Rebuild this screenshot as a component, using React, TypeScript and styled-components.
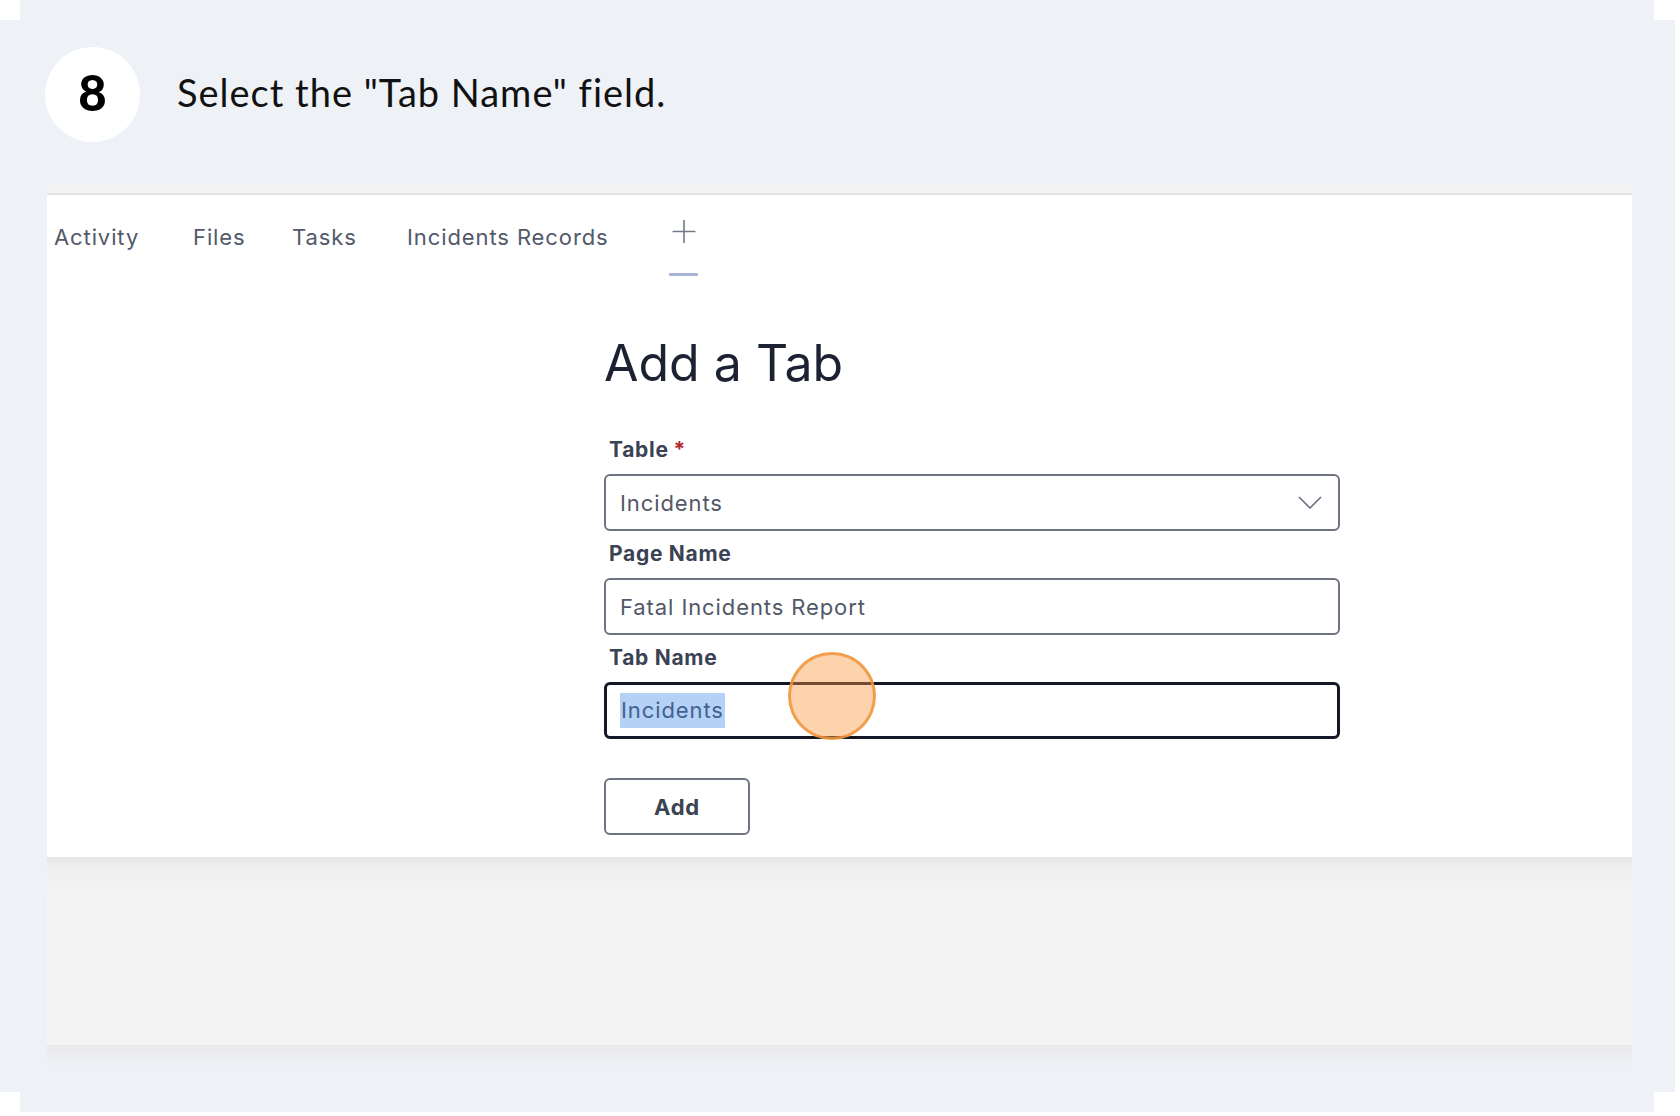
import React from 'react';
import styled, { createGlobalStyle } from 'styled-components';

const GlobalStyle = createGlobalStyle`
  html, body {
    margin: 0;
    padding: 0;
    background: #ffffff;
  }
  * {
    box-sizing: border-box;
  }
`;

const BG = '#eef2f7';

const Frame = styled.div`
  width: 1680px;
  height: 1116px;
  display: flex;
  flex-direction: column;
  overflow: hidden;
`;

// the step card is a cropped capture: a narrower lip above and below
const Lip = styled.div`
  height: 20px;
  width: 1634px;
  margin-left: 20px;
  background: ${BG};
  flex-shrink: 0;
`;

const Board = styled.div`
  width: 1675px;
  height: 1072px;
  background: ${BG};
  display: flex;
  flex-direction: column;
  flex-shrink: 0;
`;

const StepHeader = styled.div`
  display: flex;
  align-items: center;
  gap: 37px;
  padding: 27px 0 0 45px;
`;

const StepBadge = styled.div`
  width: 95px;
  height: 95px;
  border-radius: 50%;
  background: #ffffff;
  display: flex;
  align-items: center;
  justify-content: center;
  font-family: Lato, 'Open Sans', sans-serif;
  font-weight: 900;
  font-size: 49px;
  color: #000;
  padding-bottom: 6px;
`;

const StepTitle = styled.div`
  font-family: Lato, 'Open Sans', sans-serif;
  font-size: 38px;
  letter-spacing: 1px;
  color: #111;
  padding-bottom: 6px;
`;

const Shot = styled.div`
  margin: 42px 0 0 47px;
  width: 1585px;
  display: flex;
  flex-direction: column;
`;

const ShotTopStrip = styled.div`
  height: 11px;
  background: #f3f3f3;
  border-bottom: 2px solid #e3e3e3;
`;

const Panel = styled.div`
  height: 662px;
  background: #ffffff;
  display: flex;
  flex-direction: column;
  font-family: Inter, 'Noto Sans', sans-serif;
`;

const TabBar = styled.div`
  height: 82px;
  display: flex;
  align-items: flex-start;
  padding-left: 7px;
`;

const Tab = styled.div<{ w: number }>`
  width: ${(p) => p.w}px;
  padding-top: 25px;
  line-height: 34px;
  font-size: 22px;
  letter-spacing: 0.9px;
  color: #525969;
  white-space: nowrap;
`;

const AddTab = styled.div`
  display: flex;
  flex-direction: column;
  align-items: center;
  width: 29px;
  padding-top: 25px;
  color: #737987;

  svg {
    display: block;
  }
`;

const TabUnderline = styled.div`
  margin-top: 30px;
  width: 29px;
  height: 3px;
  border-radius: 1px;
  background: #a9b3d3;
`;

const Form = styled.div`
  margin-left: 557px;
  width: 736px;
  display: flex;
  flex-direction: column;
`;

const Title = styled.h1`
  margin: 56px 0 0;
  font-size: 50px;
  line-height: 60px;
  font-weight: 400;
  color: #1d2232;
  letter-spacing: 0;
`;

const Field = styled.div<{ first?: boolean }>`
  margin-top: ${(p) => (p.first ? '43px' : '9px')};
  display: flex;
  flex-direction: column;
`;

const Label = styled.label`
  margin-left: 5px;
  line-height: 28px;
  font-size: 21px;
  font-weight: 700;
  color: #3b4254;
  letter-spacing: 0.7px;
  margin-bottom: 10px;
`;

const Req = styled.span`
  color: #b3262b;
  margin-left: 5px;
`;

const Box = styled.div<{ focused?: boolean }>`
  height: 57px;
  display: flex;
  align-items: center;
  justify-content: space-between;
  padding: 0 16px 0 14px;
  border: ${(p) => (p.focused ? '3px solid #141826' : '2px solid #6e7381')};
  border-radius: 6px;
  font-size: 22px;
  color: #515867;
  letter-spacing: 0.9px;
  position: relative;
`;

const Selected = styled.span`
  background: #b4d1f6;
  color: #44608f;
  line-height: 35px;
  margin-left: -1px;
  padding: 0 1px;
`;

const Cursor = styled.div`
  position: absolute;
  left: 181px;
  top: -33px;
  width: 88px;
  height: 88px;
  border-radius: 50%;
  background: rgba(249, 150, 60, 0.42);
  border: 3px solid rgba(240, 150, 60, 0.85);
`;

const AddButton = styled.button`
  margin-top: 39px;
  width: 146px;
  height: 57px;
  background: #fff;
  border: 2px solid #6e7381;
  border-radius: 6px;
  font-family: Inter, 'Noto Sans', sans-serif;
  font-size: 22px;
  font-weight: 700;
  color: #3b4254;
  letter-spacing: 0.8px;
`;

const Tray = styled.div`
  height: 188px;
  background: linear-gradient(#e6e6e6 0px, #f0f0f0 14px, #f4f4f4 40px, #f4f4f4);
`;

const TrayEdge = styled.div`
  height: 20px;
  background: linear-gradient(#e9e9ea, #eef0f3);
`;

const tabs = [
  { name: 'Activity', w: 139 },
  { name: 'Files', w: 99 },
  { name: 'Tasks', w: 115 },
  { name: 'Incidents Records', w: 262 },
];

const App = () => (
  <>
    <GlobalStyle />
    <Frame>
      <Lip />
      <Board>
        <StepHeader>
          <StepBadge>8</StepBadge>
          <StepTitle>Select the "Tab Name" field.</StepTitle>
        </StepHeader>
        <Shot>
          <ShotTopStrip />
          <Panel>
            <TabBar>
              {tabs.map((t) => (
                <Tab key={t.name} w={t.w}>
                  {t.name}
                </Tab>
              ))}
              <AddTab>
                <svg width="26" height="23" viewBox="0 0 26 23">
                  <path d="M13 0v23M1.5 11.5h23" stroke="currentColor" strokeWidth="1.6" fill="none" />
                </svg>
                <TabUnderline />
              </AddTab>
            </TabBar>
            <Form>
              <Title>Add a Tab</Title>
              <Field first>
                <Label>
                  Table
                  <Req>*</Req>
                </Label>
                <Box>
                  Incidents
                  <svg width="24" height="13" viewBox="0 0 24 13">
                    <path d="M1 1l11 11L23 1" stroke="#6b7080" strokeWidth="1.6" fill="none" />
                  </svg>
                </Box>
              </Field>
              <Field>
                <Label>Page Name</Label>
                <Box>Fatal Incidents Report</Box>
              </Field>
              <Field>
                <Label>Tab Name</Label>
                <Box focused>
                  <Selected>Incidents</Selected>
                  <Cursor />
                </Box>
              </Field>
              <div>
                <AddButton>Add</AddButton>
              </div>
            </Form>
          </Panel>
          <Tray />
          <TrayEdge />
        </Shot>
      </Board>
      <Lip />
    </Frame>
  </>
);

export default App;
